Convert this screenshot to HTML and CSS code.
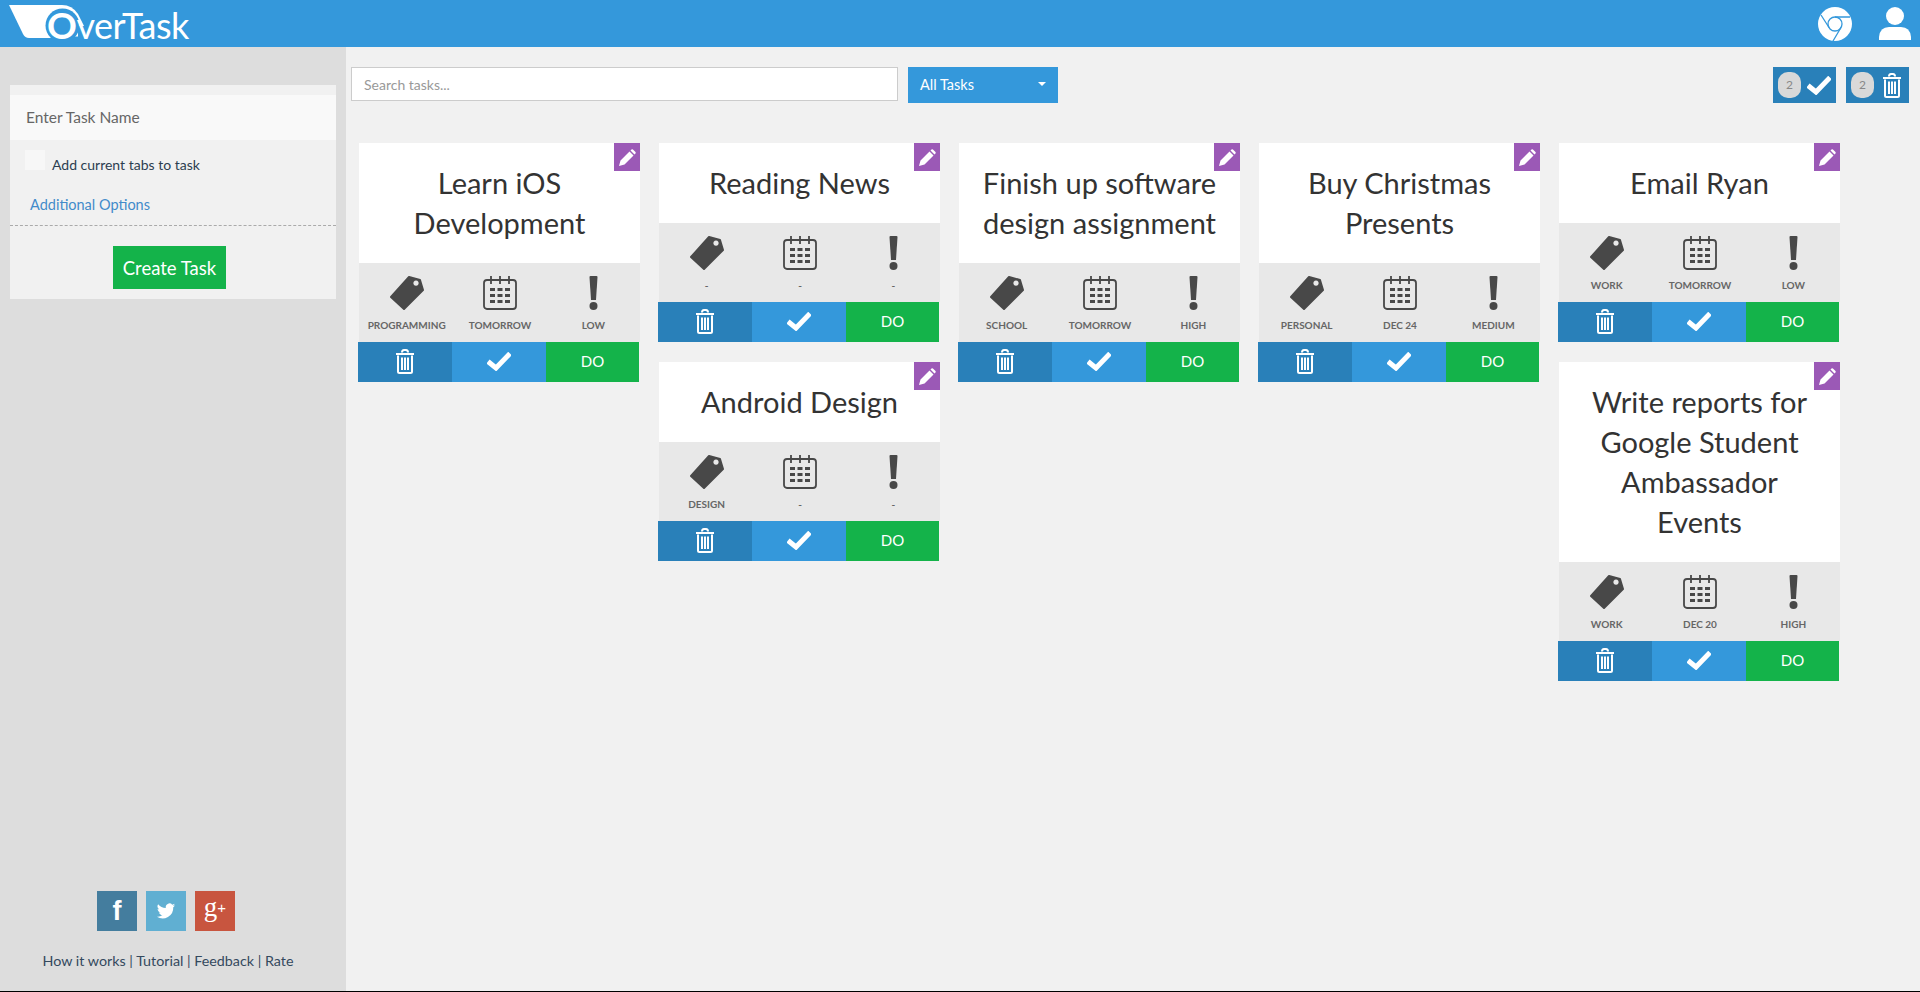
FILE: index.html
```html
<!DOCTYPE html>
<html lang="en">
  <head>
    <meta charset="UTF-8" />
    <title>OverTask</title>
    <link rel="stylesheet" href="styles.css">
  </head>
  <body>
    <svg class="sprite" xmlns="http://www.w3.org/2000/svg">
      <symbol id="i-tag" viewBox="0 0 34 34">
        <path fill-rule="evenodd" stroke="currentColor" stroke-width="2" stroke-linejoin="round" d="M19 1 L30 4 L33 14 L14 33 L1 21 Z M26 3.500 a3.600 3.600 0 1 0 0.010 0 Z" fill="currentColor"/>
      </symbol>
      <symbol id="i-cal" viewBox="0 0 34 34">
        <rect x="1" y="4" width="32" height="29" rx="3" fill="none" stroke="currentColor" stroke-width="1.800"/>
        <path d="M8 0v8M17 0v8M26 0v8" stroke="currentColor" stroke-width="1.800" fill="none"/>
        <path fill="currentColor" d="M7 12h5v3H7zM14.500 12h5v3h-5zM22 12h5v3h-5zM7 18h5v3H7zM14.500 18h5v3h-5zM22 18h5v3h-5zM7 24h5v3H7zM14.500 24h5v3h-5zM22 24h5v3h-5z"/>
      </symbol>
      <symbol id="i-excl" viewBox="0 0 9 34">
        <path fill="currentColor" d="M0.500 1 Q0.500 0 1.500 0 H7.500 Q8.500 0 8.500 1 L7 24 H2 Z"/>
        <circle cx="4.500" cy="30" r="4" fill="currentColor"/>
      </symbol>
      <symbol id="i-trash" viewBox="0 0 18 25">
        <path fill="none" stroke="currentColor" stroke-width="2" d="M0 5h18M6 3.500Q6 1 8 1h2Q12 1 12 3.500M2 6.500V22.500Q2 24 3.500 24h11Q16 24 16 22.500V6.500"/>
        <path fill="none" stroke="currentColor" stroke-width="2" d="M6 8.500V21M9 8.500V21M12 8.500V21"/>
      </symbol>
      <symbol id="i-check" viewBox="0 0 24 19">
        <path fill="none" stroke="currentColor" stroke-width="5" d="M1 9.500L9 16L23 1.500"/>
      </symbol>
      <symbol id="i-pencil" viewBox="0 0 17 17">
        <path fill="currentColor" d="M0 17L1.500 11.500L10.500 2.500L14.500 6.500L5.500 15.500ZM11.500 1.500L12.500 0.500Q13.200 0 13.900 0.500L16.500 3.100Q17 3.800 16.500 4.500L15.500 5.500Z"/>
      </symbol>
    </svg>

    <header class="topbar">
      <a class="logo" href="#">
        <svg class="logo-shape" viewBox="0 0 100 48">
          <path fill="#fff" d="M9 5H62Q72 5 78 14L90 38H29Q25 38 23 34Z"/>
          <circle cx="62.500" cy="25.500" r="17" fill="#3498db"/>
          <path fill="#3498db" d="M78 38h14v-12h-14z"/>
          <path fill="#3498db" d="M72 38h20v-1.500h-20z"/>
        </svg>
        <span class="logo-text"><span class="logo-o">O</span>verTask</span>
      </a>
      <div class="topbar-icons">
        <svg class="chrome" viewBox="0 0 34 34">
          <circle cx="17" cy="17" r="17" fill="#fff"/>
          <g fill="none" stroke="#3498db" stroke-width="1.300">
            <circle cx="17" cy="17" r="7"/>
            <path d="M17 10H32M11 20.500L3 8M23 20.500L15 34"/>
          </g>
        </svg>
        <svg class="user" viewBox="0 0 32 33">
          <circle cx="16" cy="9" r="9" fill="#fff"/>
          <path fill="#fff" d="M0 33V30Q1 20 10 20H22Q31 20 32 30V33Z"/>
        </svg>
      </div>
    </header>

    <div class="layout">
      <aside class="sidebar">
        <form class="new-task">
          <input class="task-name" type="text" placeholder="Enter Task Name" />
          <label class="tabs-row"><span class="tabs-box"></span><span class="tabs-text">Add current tabs to task</span></label>
          <a class="more-options" href="#">Additional Options</a>
          <div class="new-task-foot">
            <button class="create-btn" type="button">Create Task</button>
          </div>
        </form>

        <div class="side-foot">
          <div class="socials">
            <a class="social fb" href="#">f</a>
            <a class="social tw" href="#">
              <svg viewBox="0 0 24 24"><path fill="#fff" d="M23 5.100c-.8.400-1.700.600-2.600.700.900-.600 1.600-1.400 2-2.500-.900.500-1.800.900-2.900 1.100a4.500 4.500 0 0 0-7.700 4.100C8 8.300 4.700 6.500 2.500 3.800a4.500 4.500 0 0 0 1.400 6c-.700 0-1.400-.200-2-.600 0 2.200 1.500 4 3.600 4.500-.700.200-1.400.200-2 .100.600 1.800 2.200 3.100 4.200 3.100A9 9 0 0 1 1 18.800 12.800 12.800 0 0 0 20.700 7.400c.900-.600 1.700-1.400 2.300-2.300z"/></svg>
            </a>
            <a class="social gp" href="#">g<sup>+</sup></a>
          </div>
          <p class="side-links">
            <a href="#">How it works</a> | <a href="#">Tutorial</a> | <a href="#">Feedback</a> | <a href="#">Rate</a>
          </p>
        </div>
      </aside>

      <main class="content">
        <div class="toolbar">
          <input class="search" type="text" placeholder="Search tasks..." />
          <div class="filter"><span>All Tasks</span><span class="caret"></span></div>
          <div class="bulk">
            <button class="bulk-btn" type="button"><span class="badge">2</span><svg class="bulk-check"><use href="#i-check"/></svg></button>
            <button class="bulk-btn" type="button"><span class="badge">2</span><svg class="bulk-trash"><use href="#i-trash"/></svg></button>
          </div>
        </div>

        <div class="board">
          <div class="column">
            <article class="card">
              <a class="edit" href="#"><svg><use href="#i-pencil"/></svg></a>
              <h2 class="card-title">Learn iOS Development</h2>
              <div class="card-info">
                <div class="info"><svg class="ic-tag"><use href="#i-tag"/></svg><span>PROGRAMMING</span></div>
                <div class="info"><svg class="ic-cal"><use href="#i-cal"/></svg><span>TOMORROW</span></div>
                <div class="info"><svg class="ic-excl"><use href="#i-excl"/></svg><span>LOW</span></div>
              </div>
              <div class="card-actions">
                <a class="act act-del" href="#"><svg class="ic-trash"><use href="#i-trash"/></svg></a>
                <a class="act act-done" href="#"><svg class="ic-check"><use href="#i-check"/></svg></a>
                <a class="act act-do" href="#">DO</a>
              </div>
            </article>
          </div>

          <div class="column">
            <article class="card">
              <a class="edit" href="#"><svg><use href="#i-pencil"/></svg></a>
              <h2 class="card-title">Reading News</h2>
              <div class="card-info">
                <div class="info"><svg class="ic-tag"><use href="#i-tag"/></svg><span>-</span></div>
                <div class="info"><svg class="ic-cal"><use href="#i-cal"/></svg><span>-</span></div>
                <div class="info"><svg class="ic-excl"><use href="#i-excl"/></svg><span>-</span></div>
              </div>
              <div class="card-actions">
                <a class="act act-del" href="#"><svg class="ic-trash"><use href="#i-trash"/></svg></a>
                <a class="act act-done" href="#"><svg class="ic-check"><use href="#i-check"/></svg></a>
                <a class="act act-do" href="#">DO</a>
              </div>
            </article>
            <article class="card">
              <a class="edit" href="#"><svg><use href="#i-pencil"/></svg></a>
              <h2 class="card-title">Android Design</h2>
              <div class="card-info">
                <div class="info"><svg class="ic-tag"><use href="#i-tag"/></svg><span>DESIGN</span></div>
                <div class="info"><svg class="ic-cal"><use href="#i-cal"/></svg><span>-</span></div>
                <div class="info"><svg class="ic-excl"><use href="#i-excl"/></svg><span>-</span></div>
              </div>
              <div class="card-actions">
                <a class="act act-del" href="#"><svg class="ic-trash"><use href="#i-trash"/></svg></a>
                <a class="act act-done" href="#"><svg class="ic-check"><use href="#i-check"/></svg></a>
                <a class="act act-do" href="#">DO</a>
              </div>
            </article>
          </div>

          <div class="column">
            <article class="card">
              <a class="edit" href="#"><svg><use href="#i-pencil"/></svg></a>
              <h2 class="card-title">Finish up software design assignment</h2>
              <div class="card-info">
                <div class="info"><svg class="ic-tag"><use href="#i-tag"/></svg><span>SCHOOL</span></div>
                <div class="info"><svg class="ic-cal"><use href="#i-cal"/></svg><span>TOMORROW</span></div>
                <div class="info"><svg class="ic-excl"><use href="#i-excl"/></svg><span>HIGH</span></div>
              </div>
              <div class="card-actions">
                <a class="act act-del" href="#"><svg class="ic-trash"><use href="#i-trash"/></svg></a>
                <a class="act act-done" href="#"><svg class="ic-check"><use href="#i-check"/></svg></a>
                <a class="act act-do" href="#">DO</a>
              </div>
            </article>
          </div>

          <div class="column">
            <article class="card">
              <a class="edit" href="#"><svg><use href="#i-pencil"/></svg></a>
              <h2 class="card-title">Buy Christmas Presents</h2>
              <div class="card-info">
                <div class="info"><svg class="ic-tag"><use href="#i-tag"/></svg><span>PERSONAL</span></div>
                <div class="info"><svg class="ic-cal"><use href="#i-cal"/></svg><span>DEC 24</span></div>
                <div class="info"><svg class="ic-excl"><use href="#i-excl"/></svg><span>MEDIUM</span></div>
              </div>
              <div class="card-actions">
                <a class="act act-del" href="#"><svg class="ic-trash"><use href="#i-trash"/></svg></a>
                <a class="act act-done" href="#"><svg class="ic-check"><use href="#i-check"/></svg></a>
                <a class="act act-do" href="#">DO</a>
              </div>
            </article>
          </div>

          <div class="column">
            <article class="card">
              <a class="edit" href="#"><svg><use href="#i-pencil"/></svg></a>
              <h2 class="card-title">Email Ryan</h2>
              <div class="card-info">
                <div class="info"><svg class="ic-tag"><use href="#i-tag"/></svg><span>WORK</span></div>
                <div class="info"><svg class="ic-cal"><use href="#i-cal"/></svg><span>TOMORROW</span></div>
                <div class="info"><svg class="ic-excl"><use href="#i-excl"/></svg><span>LOW</span></div>
              </div>
              <div class="card-actions">
                <a class="act act-del" href="#"><svg class="ic-trash"><use href="#i-trash"/></svg></a>
                <a class="act act-done" href="#"><svg class="ic-check"><use href="#i-check"/></svg></a>
                <a class="act act-do" href="#">DO</a>
              </div>
            </article>
            <article class="card">
              <a class="edit" href="#"><svg><use href="#i-pencil"/></svg></a>
              <h2 class="card-title">Write reports for Google Student Ambassador Events</h2>
              <div class="card-info">
                <div class="info"><svg class="ic-tag"><use href="#i-tag"/></svg><span>WORK</span></div>
                <div class="info"><svg class="ic-cal"><use href="#i-cal"/></svg><span>DEC 20</span></div>
                <div class="info"><svg class="ic-excl"><use href="#i-excl"/></svg><span>HIGH</span></div>
              </div>
              <div class="card-actions">
                <a class="act act-del" href="#"><svg class="ic-trash"><use href="#i-trash"/></svg></a>
                <a class="act act-done" href="#"><svg class="ic-check"><use href="#i-check"/></svg></a>
                <a class="act act-do" href="#">DO</a>
              </div>
            </article>
          </div>
        </div>
      </main>
    </div>
  </body>
</html>
```

FILE: styles.css
```css
* {
  box-sizing: border-box;
}

html,
body {
  margin: 0;
  height: 992px;
  overflow: hidden;
}

body {
  background: #000;
  font-family: Lato, "Open Sans", sans-serif;
  color: #34495e;
  padding-bottom: 1px;
}

a {
  text-decoration: none;
}

.sprite {
  display: none;
}

/* top bar */
.topbar {
  height: 47px;
  background: #3498db;
  display: flex;
  justify-content: space-between;
  align-items: center;
}

.logo {
  position: relative;
  display: block;
  width: 200px;
  height: 47px;
}

.logo-shape {
  position: absolute;
  left: 0;
  top: 0;
  width: 100px;
  height: 48px;
}

.logo-text {
  position: absolute;
  left: 47px;
  top: 3px;
  font-size: 36px;
  line-height: 44px;
  font-weight: 400;
  color: #fff;
  letter-spacing: -0.5px;
  white-space: nowrap;
}

.logo-o {
  font-weight: 700;
  font-size: 37px;
}

.topbar-icons {
  display: flex;
  align-items: center;
  padding-right: 9px;
  gap: 27px;
}

.chrome {
  width: 34px;
  height: 34px;
}

.user {
  width: 32px;
  height: 33px;
}

/* layout */
.layout {
  display: flex;
  height: 944px;
}

.sidebar {
  width: 346px;
  flex: none;
  background: #ddd;
  padding: 38px 10px 0;
  display: flex;
  flex-direction: column;
}

.content {
  flex: 1;
  background: #f1f1f1;
  padding: 20px 11px 0 5px;
}

/* new task form */
.new-task {
  background: #f1f1f1;
  padding-top: 10px;
  height: 214px;
}

.task-name {
  display: block;
  width: 100%;
  height: 45px;
  border: 0;
  background: #f9f9f9;
  padding: 0 16px 2px;
  font-family: inherit;
  font-size: 15.500px;
  color: #666;
}

.task-name::placeholder {
  color: #666;
  opacity: 1;
}

.tabs-row {
  display: flex;
  margin: 10px 0 0 15px;
  height: 28px;
}

.tabs-box {
  width: 20px;
  height: 20px;
  background: #f7f7f7;
}

.tabs-text {
  margin: 6px 0 0 7px;
  font-size: 14px;
  line-height: 18px;
  color: #2c3e50;
}

.more-options {
  display: block;
  padding: 18px 0 11px 20px;
  font-size: 14.500px;
  line-height: 18px;
  color: #428bca;
  border-bottom: 1px dashed #aaa;
}

.new-task-foot {
  display: flex;
  justify-content: center;
  padding: 20px 7px 0 0;
}

.create-btn {
  width: 113px;
  height: 43px;
  border: 0;
  background: #14b34a;
  color: #fff;
  font-family: inherit;
  font-size: 18.500px;
  padding: 0;
}

/* sidebar footer */
.side-foot {
  margin-top: auto;
  padding: 0 10px 20px 0;
  text-align: center;
}

.socials {
  display: flex;
  justify-content: center;
  gap: 9px;
  padding-right: 4px;
}

.social {
  width: 40px;
  height: 40px;
  display: flex;
  align-items: center;
  justify-content: center;
  color: #fff;
}

.fb {
  background: #447d9e;
  font-family: "Liberation Sans", sans-serif;
  font-weight: 700;
  font-size: 27px;
}

.tw {
  background: #60afd2;
}

.tw svg {
  width: 20px;
  height: 20px;
}

.gp {
  background: #c8553f;
  font-family: "Liberation Serif", serif;
  font-size: 27px;
  padding-bottom: 7px;
}

.gp sup {
  font-size: 15px;
  line-height: 0;
  font-family: "Liberation Sans", sans-serif;
}

.side-links {
  margin: 20px 0 0;
  font-size: 14.300px;
  line-height: 20px;
}

.side-links a {
  color: #34495e;
}

/* toolbar */
.toolbar {
  display: flex;
  align-items: flex-start;
  height: 36px;
  margin-bottom: 40px;
}

.search {
  width: 547px;
  height: 34px;
  border: 1px solid #ccc;
  background: #fff;
  padding: 0 12px;
  font-family: inherit;
  font-size: 14px;
}

.search::placeholder {
  color: #999;
  opacity: 1;
}

.filter {
  margin-left: 10px;
  width: 150px;
  height: 36px;
  background: #3498db;
  color: #fff;
  font-size: 14.500px;
  display: flex;
  align-items: center;
  justify-content: space-between;
  padding: 0 12px 2px;
}

.caret {
  border-left: 4px solid transparent;
  border-right: 4px solid transparent;
  border-top: 4px solid #fff;
}

.bulk {
  margin-left: auto;
  display: flex;
  gap: 10px;
}

.bulk-btn {
  width: 63px;
  height: 36px;
  border: 0;
  padding: 0 0 0 5px;
  background: #2980b9;
  display: flex;
  align-items: center;
}

.badge {
  width: 23px;
  height: 26px;
  border-radius: 10px;
  background: #d9d9d9;
  color: #888;
  font-family: Lato, sans-serif;
  font-size: 12px;
  line-height: 26px;
  text-align: center;
}

.bulk-check {
  width: 24px;
  height: 19px;
  margin-left: 6px;
  color: #fff;
}

.bulk-trash {
  width: 18px;
  height: 25px;
  margin-left: 9px;
  color: #fff;
}

/* task board */
.board {
  display: flex;
  gap: 19px;
  padding-left: 8px;
}

.column {
  width: 281px;
  display: flex;
  flex-direction: column;
  gap: 20px;
}

.card {
  position: relative;
}

.edit {
  position: absolute;
  top: 0;
  right: 0;
  width: 26px;
  height: 28px;
  background: #9b59b6;
  color: #fff;
  display: flex;
  align-items: center;
  justify-content: center;
}

.edit svg {
  width: 17px;
  height: 17px;
}

.card-title {
  margin: 0;
  background: #fff;
  padding: 20px;
  text-align: center;
  font-size: 29px;
  line-height: 40px;
  font-weight: 400;
  color: #333;
}

.card-info {
  height: 79px;
  background: #e8e8e8;
  display: grid;
  grid-template-columns: repeat(3, 1fr);
  padding: 13px 0 0 1px;
  color: #484848;
}

.info {
  display: flex;
  flex-direction: column;
  align-items: center;
}

.info svg {
  height: 34px;
  flex: none;
}

.ic-tag,
.ic-cal {
  width: 34px;
}

.ic-excl {
  width: 9px;
}

.info span {
  margin-top: 8px;
  font-size: 10px;
  font-weight: 700;
  line-height: 14px;
  color: #666;
}

.card-actions {
  display: grid;
  grid-template-columns: 94px 94px 93px;
  height: 40px;
  margin-left: -1px;
}

.act {
  display: flex;
  align-items: center;
  justify-content: center;
  color: #fff;
  font-size: 15px;
  padding-bottom: 2px;
}

.act-del {
  background: #2980b9;
}

.act-done {
  background: #3498db;
}

.act-do {
  background: #14b34a;
}

.ic-trash {
  width: 18px;
  height: 25px;
}

.ic-check {
  width: 24px;
  height: 19px;
}
```
